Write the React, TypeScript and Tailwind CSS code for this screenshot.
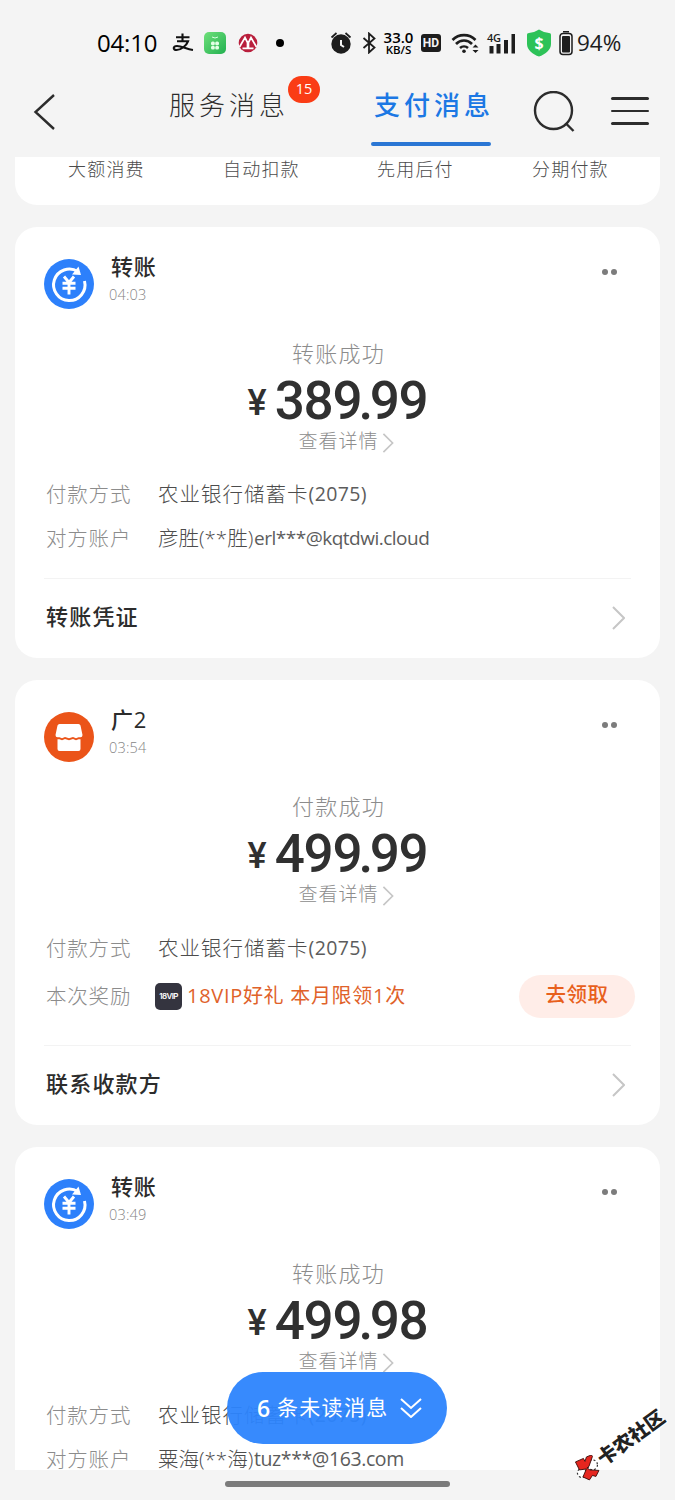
import React from "react";

const CJK = "font-['Open_Sans','Noto_Sans_CJK_SC',sans-serif]";

function Chevron({ className }: { className: string }) {
  return (
    <svg viewBox="0 0 13 24" fill="none" stroke="#c6c6c6" strokeWidth="2" className={className}>
      <path d="M1 1l11 11L1 23" />
    </svg>
  );
}

function StatusBar() {
  return (
    <div className="flex h-[72px] shrink-0 items-center pt-[14px] pl-[97px] text-black">
      <span className="w-[62px] text-[24px] leading-6 font-medium tracking-[-0.2px]">04:10</span>
      <svg viewBox="0 0 22 20" className="ml-[13px] h-5 w-[22px]" fill="none" stroke="#111" strokeWidth="2.1">
        <path d="M4 4.300h13.500M10.500 .5v8M5 8.300h11C14.500 12.500 9 17 4.500 17c-4 0-3.500-4 .5-4 5 0 9 3 16 4" />
      </svg>
      <svg viewBox="0 0 22 22" className="ml-[10px] size-[22px]">
        <defs>
          <linearGradient id="mallGreen" x1="0" y1="0" x2="1" y2="1">
            <stop offset="0" stopColor="#6fe07a" />
            <stop offset="1" stopColor="#22b050" />
          </linearGradient>
        </defs>
        <rect width="22" height="22" rx="5" fill="url(#mallGreen)" />
        <path d="M8 5q3 2 6 0" fill="none" stroke="#d9ffe0" strokeWidth="1" />
        <g fill="#e2ffe5">
          <rect x="7" y="9.500" width="3.800" height="3.800" rx="1.500" />
          <rect x="11.200" y="9.500" width="3.800" height="3.800" rx="1.500" />
          <rect x="7" y="13.800" width="3.800" height="3.800" rx="1.500" />
          <rect x="11.200" y="13.800" width="3.800" height="3.800" rx="1.500" />
        </g>
      </svg>
      <svg viewBox="0 0 20 20" className="ml-3 size-5">
        <circle cx="10" cy="10" r="9.300" fill="#b91f3c" />
        <path d="M1.500 14L7 4.500l3 6 3-6L18.500 14M4.500 15.300h5V10M10.500 10v5.300h5" fill="none" stroke="#fff" strokeWidth="1.700" />
      </svg>
      <span className="ml-[18px] size-2 rounded-full bg-black" />
      <svg viewBox="0 0 22 22" className="ml-[46px] size-[22px]">
        <circle cx="11" cy="12" r="9.700" fill="#1d1d1d" />
        <path d="M1.500 5.500l5-4.500M20.500 5.500l-5-4.500" stroke="#1d1d1d" strokeWidth="1.700" />
        <path d="M11 8v5l3 2" fill="none" stroke="#f4f4f4" strokeWidth="2" />
      </svg>
      <svg viewBox="0 0 14 22" className="ml-[10px] h-[22px] w-[14px]" fill="none" stroke="#1d1d1d" strokeWidth="1.800">
        <path d="M1.500 6l11 9.500L7 20.500v-19l5.500 5L1.500 16" />
      </svg>
      <div className="ml-[7px] flex w-[31px] flex-col items-center font-['Open_Sans',sans-serif] font-semibold">
        <span className="text-[15px] leading-[13px]">33.0</span>
        <span className="text-[11.500px] leading-[12px] tracking-[-0.1px]">KB/S</span>
      </div>
      <span className="ml-[7px] flex h-[18px] w-[20px] items-center justify-center rounded-[3px] bg-[#1d1d1d] font-['Roboto',sans-serif] text-[12px] font-bold text-[#f4f4f4]">HD</span>
      <svg viewBox="0 0 28 22" className="ml-[10px] h-[22px] w-7" fill="none" stroke="#1d1d1d" strokeWidth="2.600">
        <path d="M1.500 8a16 16 0 0 1 23 0M5 12a11 11 0 0 1 16 0M9 16a6 6 0 0 1 8 0" />
        <circle cx="13" cy="19.300" r="1.800" fill="#1d1d1d" stroke="none" />
        <path d="M21.500 15.500l3-3 3 3zM21.500 18l3 3 3-3z" fill="#1d1d1d" stroke="none" />
      </svg>
      <div className="relative ml-[8px] h-[21px] w-[29px]">
        <svg viewBox="0 0 29 21" className="size-full" fill="#1d1d1d">
          <path d="M2.500 13h4v7.500h-4zM9.500 11h4v9.500h-4zM17 7h4v13.500h-4zM24.500 1h3.500v19.500h-3.500z" />
        </svg>
        <span className="absolute -top-px left-0 text-[11px] leading-[11px] font-semibold tracking-[-0.3px] text-[#1d1d1d]">4G</span>
      </div>
      <div className="relative ml-[10px] flex h-[28px] w-[26px] items-center justify-center">
        <svg viewBox="0 0 26 28" className="absolute inset-0 size-full" fill="#2dc258">
          <path d="M13 .5c3 2 7 3.200 10 3.500 1.500.2 2 .8 2 2v9c0 6-6 10.500-12 12.500C7 25.500 1 21 1 15V6c0-1.200.5-1.800 2-2C6 3.700 10 2.500 13 .5z" />
        </svg>
        <span className="relative text-[16px] leading-4 font-bold text-white">$</span>
      </div>
      <svg viewBox="0 0 14 26" className="ml-[7px] h-[26px] w-[14px]">
        <path d="M4 1h6v1.500H4z" fill="#1d1d1d" />
        <rect x="1" y="3.500" width="12" height="21" rx="3" fill="none" stroke="#1d1d1d" strokeWidth="1.500" />
        <rect x="3" y="6" width="8" height="16.500" rx="1" fill="#1d1d1d" />
      </svg>
      <span className="ml-[4px] text-[22.500px] leading-6 text-[#1d1d1d]">94%</span>
    </div>
  );
}

function Header() {
  return (
    <div className="flex h-[85px] shrink-0 text-[#2c2c2c]">
      <svg viewBox="0 0 22 36" className="mt-[22px] ml-[33px] h-9 w-[22px]" fill="none" stroke="#2c2c2c" strokeWidth="2.400">
        <path d="M21 1L2.500 18 21 35" />
      </svg>
      <div className="relative ml-[114px] h-full w-[119px] pt-[17px]">
        <span className="text-[26px] leading-8 font-light tracking-[4px] whitespace-nowrap">服务消息</span>
        <span className="absolute top-[4px] left-[119px] flex h-[27px] w-[32px] items-center justify-center rounded-full bg-[#fa3c15] pb-[2px] text-[14.500px] text-white">15</span>
      </div>
      <div className="ml-[83px] flex h-full w-[120px] flex-col pt-[17px]">
        <span className="pl-[3px] text-[26px] leading-8 font-medium tracking-[4px] whitespace-nowrap text-[#1c78e4]">支付消息</span>
        <span className="mt-[21px] h-1 w-full rounded-full bg-[#2a76d4]" />
      </div>
      <svg viewBox="0 0 42 42" className="mt-[19px] ml-[42px] size-[42px]" fill="none" stroke="#2c2c2c" strokeWidth="2.400">
        <circle cx="20.500" cy="19.500" r="18.500" />
        <path d="M32.500 32l8 8" />
      </svg>
      <div className="mt-[25px] ml-[36px] flex w-[38px] flex-col gap-[10px]">
        <span className="h-[2.500px] rounded-full bg-[#2c2c2c]" />
        <span className="h-[2.500px] rounded-full bg-[#2c2c2c]" />
        <span className="h-[2.500px] rounded-full bg-[#2c2c2c]" />
      </div>
    </div>
  );
}

function TransferIcon() {
  return (
    <svg viewBox="0 0 50 50" className="size-[50px]">
      <circle cx="25" cy="25" r="25" fill="#2d80fb" />
      <path d="M34 12.800A15.700 15.700 0 1 0 40.500 22" fill="none" stroke="#fff" strokeWidth="3" />
      <path d="M34.500 7.500l2.500 8.500-9-.5z" fill="#fff" />
      <path d="M20 17.500l5 6 5-6M18.500 24.200h13M18.500 29.300h13M25 23.500v12" fill="none" stroke="#fff" strokeWidth="2.900" />
    </svg>
  );
}

function ShopIcon() {
  return (
    <svg viewBox="0 0 50 50" className="size-[50px]">
      <circle cx="25" cy="25" r="25" fill="#eb5419" />
      <path d="M15.500 12h19q1.500 0 2 1.500L38.500 23q0 2.300-2 2.300h-2l-2.500 1-3-1.300-4 1.300-4-1.300-3 1.300-2.500-1h-2q-2 0-2-2.300l2-9.500q.5-1.500 2-1.500z" fill="#fff" />
      <path d="M13.500 27.300h2l2.500 1 3-1.300 4 1.300 4-1.300 3 1.300 2.500-1h2V37q0 2-2 2H15.500q-2 0-2-2z" fill="#fff" />
    </svg>
  );
}

type CardProps = {
  icon: React.ReactNode;
  title: string;
  time: string;
  status: string;
  whole: string;
  cents: string;
  className: string;
  children: React.ReactNode;
};

function Card({ icon, title, time, status, whole, cents, className, children }: CardProps) {
  return (
    <section className={`mx-[15px] flex shrink-0 flex-col rounded-[22px] bg-white px-[29px] pt-[26px] ${className}`}>
      <div className="flex h-14">
        <div className="mt-[6px]">{icon}</div>
        <div className="ml-[15px] flex flex-col">
          <span className="h-7 pl-[2px] text-[22px] leading-[26px] font-medium tracking-[0.8px] text-[#2c2c2c]">{title}</span>
          <span className="h-7 text-[14.500px] leading-7 font-light tracking-[0.2px] text-[#858585]">{time}</span>
        </div>
        <div className="mt-[15.500px] mr-[14px] ml-auto flex gap-[3px]">
          <span className="size-[6px] rounded-full bg-[#7c7c7c]" />
          <span className="size-[6px] rounded-full bg-[#7c7c7c]" />
        </div>
      </div>
      <div className="mt-[30px] flex flex-col items-center">
        <span className="h-[30px] pl-[2px] text-[22px] leading-[28px] font-light tracking-[1.200px] text-[#8c8c8c]">{status}</span>
        <div className="flex h-[62px] items-center font-['Roboto',sans-serif] text-[#303030]">
          <span className="mt-[5px] mr-[8px] text-[36px] leading-[62px] font-medium">¥</span>
          <span className="mt-[2px] text-[53px] leading-[62px] font-medium tracking-[-1.200px]">
            {whole}
            <span className="-ml-[3px] tracking-[-3.500px]">.</span>
            {cents}
          </span>
        </div>
        <div className="flex h-5 items-center pl-[17px] text-[19px] leading-5 font-light tracking-[1px] text-[#8c8c8c]">
          查看详情
          <Chevron className="mt-[3px] ml-[3px] h-5 w-[12px]" />
        </div>
      </div>
      {children}
    </section>
  );
}

function Row({ label, children }: { label: string; children: React.ReactNode }) {
  return (
    <div className="flex h-11 items-center text-[20.500px] leading-8 font-light whitespace-nowrap text-[#4c4c4c]">
      <span className="w-[114px] shrink-0 pl-[2px] tracking-[0.800px] text-[#8c8c8c]">{label}</span>
      {children}
    </div>
  );
}

function BankRow() {
  return (
    <Row label="付款方式">
      <span className="tracking-[1px]">农业银行储蓄卡</span>
      <span className="text-[19.500px] font-normal tracking-[0.400px] text-[#5c5c5c]">(2075)</span>
    </Row>
  );
}

function Footer({ label }: { label: string }) {
  return (
    <div className="flex h-20 items-center justify-between border-t border-[#f3f3f3] pr-[6px] pb-[5px] pl-[2px]">
      <span className="text-[22px] font-medium tracking-[1.200px] text-[#2c2c2c]">{label}</span>
      <Chevron className="mt-1 h-6 w-[13px]" />
    </div>
  );
}

function Watermark() {
  return (
    <div className="absolute top-[1432px] left-[567px] flex h-[26px] w-[104px] rotate-[-36deg] items-center">
      <svg viewBox="0 0 26 26" className="mr-px size-[26px] shrink-0 rotate-[36deg]">
        <circle cx="7.500" cy="18" r="4.500" fill="#fff" stroke="#333" strokeWidth="1.200" strokeDasharray="2 2" />
        <circle cx="18" cy="10" r="5" fill="#fff" stroke="#333" strokeWidth="1.200" strokeDasharray="2 2" />
        <path d="M1 7l8-3.500 1.500 3L12 2l5-2 1 1.500-3.500 10-2 1.500 3 2 9 .5-3 6-3.500-1-3 4.500L8.500 22l3.500-8-7 1z" fill="#e5261f" stroke="#3a0b09" strokeWidth=".9" />
      </svg>
      <span className="font-['Noto_Sans_CJK_SC',sans-serif] text-[19.500px] leading-6 font-black whitespace-nowrap text-[#222] [text-shadow:1px_1px_0_#fff,-1px_-1px_0_#fff]">卡农社区</span>
    </div>
  );
}

export default function App() {
  return (
    <div className={`relative flex h-[1500px] w-[675px] flex-col overflow-hidden bg-[#f4f4f4] ${CJK}`}>
      <StatusBar />
      <Header />
      <main className="flex h-[1313px] shrink-0 flex-col overflow-hidden">
        <div className="mx-[15px] flex h-12 shrink-0 rounded-b-[22px] bg-white pl-[53px] text-[18px] leading-6 font-light tracking-[1.200px] text-[#4c4c4c]">
          <span className="w-[155px]">大额消费</span>
          <span className="w-[154px]">自动扣款</span>
          <span className="w-[155px]">先用后付</span>
          <span>分期付款</span>
        </div>
        <Card icon={<TransferIcon />} title="转账" time="04:03" status="转账成功" whole="389" cents="99" className="mt-[22px] h-[431px]">
          <div className="mt-[21px] mb-[18px]">
            <BankRow />
            <Row label="对方账户">
              <span className="w-[96px]">彦胜(**胜)</span>
              <span className="text-[19px] font-normal tracking-[-0.500px] text-[#5c5c5c]">erl***@kqtdwi.cloud</span>
            </Row>
          </div>
          <Footer label="转账凭证" />
        </Card>
        <Card icon={<ShopIcon />} title="广2" time="03:54" status="付款成功" whole="499" cents="99" className="mt-[22px] h-[445px]">
          <div className="mt-[22px] mb-[23px]">
            <BankRow />
            <div className="-mr-[4px] flex h-[52px] items-center">
              <Row label="本次奖励">
                <span className="-ml-[3px] flex size-[27px] items-center justify-center rounded-[5px] bg-[#34343f] font-['Inter',sans-serif] text-[8px] font-semibold tracking-[-0.600px] text-white">18VIP</span>
                <span className="ml-[5px] text-[20px] font-normal tracking-[0.700px] text-[#e0622a]">18VIP好礼 本月限领1次</span>
              </Row>
              <span className="ml-auto flex h-[43px] w-[116px] shrink-0 items-center justify-center rounded-full bg-[#ffede8] pb-[3px] text-[20.500px] font-medium tracking-[0.500px] text-[#e8601c]">去领取</span>
            </div>
          </div>
          <Footer label="联系收款方" />
        </Card>
        <Card icon={<TransferIcon />} title="转账" time="03:49" status="转账成功" whole="499" cents="98" className="mt-[22px] h-[431px]">
          <div className="mt-[22px] mb-[18px]">
            <BankRow />
            <Row label="对方账户">
              <span className="w-[96px]">粟海(**海)</span>
              <span className="text-[19.500px] font-normal tracking-[-0.400px] text-[#5c5c5c]">tuz***@163.com</span>
            </Row>
          </div>
        </Card>
      </main>
      <div className="flex h-[30px] shrink-0 justify-center pt-[11px]">
        <span className="h-[6px] w-[225px] rounded-full bg-[#7b7b7b]" />
      </div>
      <button className="absolute top-[1372px] left-[227px] flex h-[72px] w-[220px] items-center rounded-full bg-[#2c84fd]/95 pl-[30px] whitespace-nowrap text-white">
        <span className="w-[20px] text-left text-[23px] font-semibold">6</span>
        <span className="text-[21px] tracking-[1.300px]">条未读消息</span>
        <svg viewBox="0 0 22 20" className="ml-[11px] h-5 w-[22px] shrink-0" fill="none" stroke="#fff" strokeWidth="2">
          <path d="M1 1l10 9L21 1M1 10l10 9 10-9" />
        </svg>
      </button>
      <Watermark />
    </div>
  );
}
